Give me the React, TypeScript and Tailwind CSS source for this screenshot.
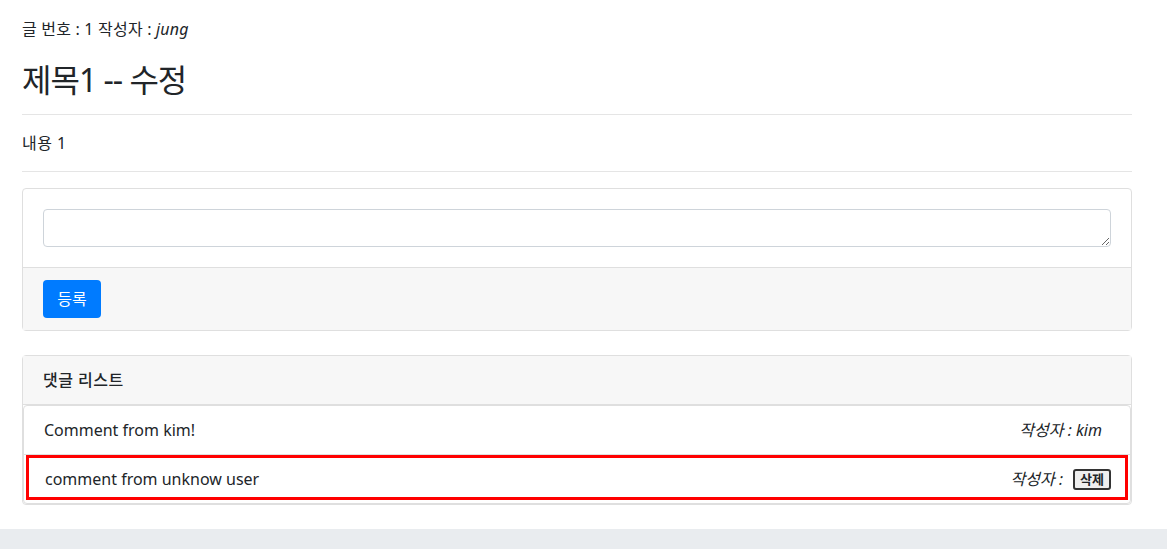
const font = { fontFamily: '"Noto Sans", "Noto Sans CJK KR", sans-serif' }

const comments = [
  { id: 1, text: 'Comment from kim!', writer: 'kim', mine: false },
  { id: 2, text: 'comment from unknow user', writer: '', mine: true },
]

export default function App() {
  return (
    <div className="min-h-screen bg-white text-[16px] leading-6 text-[#212529]" style={font}>
      <div className="w-[1110px] pl-[22px] box-content pt-[17px]">
        <p className="mb-[20px] tracking-[0.2px]">
          글 번호 : 1 작성자 : <em>jung</em>
        </p>
        <h2 className="text-[32px] font-normal leading-[38px] tracking-[-1px]">제목1 -- 수정</h2>
        <hr className="mt-[15px] border-t border-[#e5e5e5]" />
        <p className="my-[16px] tracking-[0.5px]">내용 1</p>
        <hr className="border-t border-[#e5e5e5]" />

        <div className="mt-[16px] rounded-[4px] border border-[#dfdfdf]">
          <div className="p-[20px]">
            <textarea className="block h-[38px] w-full rounded-[4px] border border-[#ced4da] px-3 py-1.5 outline-none" />
          </div>
          <div className="border-t border-[#dfdfdf] bg-[#f7f7f7] px-[20px] py-[12px]">
            <button className="h-[38px] w-[58px] rounded-[4px] bg-[#007bff] text-white">등록</button>
          </div>
        </div>

        <div className="mt-[24px] rounded-[4px] border border-[#dfdfdf]">
          <div className="border-b border-[#dfdfdf] bg-[#f7f7f7] px-[20px] py-[12px] font-medium tracking-[0.5px]">
            댓글 리스트
          </div>
          <div className="rounded-[4px] border border-[#dfdfdf]">
            {comments.map((c) =>
              c.mine ? (
                <div key={c.id} className="px-[2px] pb-[3px]">
                  <div className="flex items-center justify-between border-[3px] border-[#ff0000] pb-[6px] pl-[16px] pr-[14px] pt-[9px]">
                    <span>{c.text}</span>
                    <span className="flex items-center italic">
                      작성자 :
                      <button className="ml-[10px] h-[21px] w-[38px] rounded-[3px] border-2 border-[#333] bg-[#efefef] text-[13px] font-bold not-italic leading-[17px]">
                        삭제
                      </button>
                    </span>
                  </div>
                </div>
              ) : (
                <div key={c.id} className="flex justify-between border-b border-[#dfdfdf] py-[12px] pl-[20px] pr-[28px]">
                  <span>{c.text}</span>
                  <span className="italic">작성자 : {c.writer}</span>
                </div>
              ),
            )}
          </div>
        </div>
      </div>
      <div className="mt-[24px] h-[40px] bg-[#e9ecef]" />
    </div>
  )
}
